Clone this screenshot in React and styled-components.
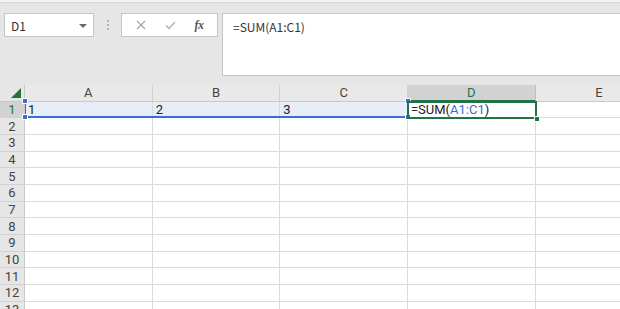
import React from "react";
import styled, { createGlobalStyle } from "styled-components";

const COL_W = 127.67;
const ROW_H = 16.67;
const HDR_W = 25;

const Global = createGlobalStyle`
  html, body { margin: 0; padding: 0; background: #fff; }
  body { font-family: "Noto Sans CJK SC", "Noto Sans", sans-serif; }
  #root { width: 620px; height: 309px; overflow: hidden; }
`;

const Page = styled.div`
  width: 620px;
  height: 309px;
  overflow: hidden;
  display: flex;
  flex-direction: column;
  background: #e6e6e6;
`;

const TopStrip = styled.div`
  height: 2px;
  background: #f4f4f4;
  border-bottom: 1px solid #d8d8d8;
`;

const FormulaBar = styled.div`
  height: 82px;
  display: flex;
  align-items: flex-start;
  padding: 10px 0 0 4px;
  box-sizing: border-box;
`;

const NameBox = styled.div`
  width: 90px;
  height: 24px;
  box-sizing: border-box;
  background: #fff;
  border: 1px solid #c6c6c6;
  display: flex;
  align-items: center;
  justify-content: space-between;
  padding: 0 6px 0 6px;
  font-size: 12px;
  color: #333;
`;

const Caret = styled.span`
  width: 0;
  height: 0;
  border-left: 4px solid transparent;
  border-right: 4px solid transparent;
  border-top: 4px solid #6a6a6a;
  margin-top: 1px;
`;

const Grip = styled.div`
  width: 27px;
  height: 24px;
  display: flex;
  flex-direction: column;
  align-items: center;
  justify-content: center;
  gap: 2px;
`;

const Dot = styled.span`
  width: 2px;
  height: 2px;
  background: #b4b4b4;
`;

const FnBox = styled.div`
  width: 97px;
  height: 24px;
  box-sizing: border-box;
  background: #fff;
  border: 1px solid #c6c6c6;
  display: flex;
  align-items: center;
  justify-content: space-around;
  padding: 0 4px;
`;

const FxLabel = styled.span`
  font-family: "Liberation Serif", serif;
  font-style: italic;
  font-weight: bold;
  font-size: 12px;
  color: #555;
  letter-spacing: -0.5px;
`;

const FormulaInput = styled.div`
  flex: 1;
  margin-left: 4px;
  height: 63px;
  box-sizing: border-box;
  background: #fff;
  border: 1px solid #c6c6c6;
  border-right: none;
  padding: 4px 0 0 10px;
  font-size: 12px;
  color: #333;
`;

const Sheet = styled.div`
  position: relative;
  flex: 1;
  background: #fff;
  display: grid;
  grid-template-columns: ${HDR_W}px repeat(5, ${COL_W}px);
  grid-auto-rows: ${ROW_H}px;
  overflow: hidden;
  font-family: Roboto, "Noto Sans", sans-serif;
`;

const Corner = styled.div`
  position: relative;
  background: #e6e6e6;
  border-right: 1px solid #c9c9c9;
  border-bottom: 1px solid #c9c9c9;
  box-sizing: border-box;
  &::after {
    content: "";
    position: absolute;
    right: 3px;
    bottom: 3px;
    width: 0;
    height: 0;
    border-left: 10px solid transparent;
    border-bottom: 10px solid #217346;
  }
`;

const ColHead = styled.div`
  box-sizing: border-box;
  background: ${(p) => (p.$active ? "#d2d2d2" : "#e9e9e9")};
  border-right: 1px solid ${(p) => (p.$active ? "#c0c0c0" : "#d0d0d0")};
  border-bottom: ${(p) => (p.$active ? "2px solid #217346" : "1px solid #c9c9c9")};
  color: ${(p) => (p.$active ? "#217346" : "#444")};
  font-size: 13px;
  display: flex;
  align-items: center;
  justify-content: center;
  line-height: 15px;
`;

const RowHead = styled.div`
  box-sizing: border-box;
  background: ${(p) => (p.$active ? "#d2d2d2" : "#e6e6e6")};
  border-right: 1px solid #c9c9c9;
  border-bottom: 1px solid #d2d2d2;
  color: ${(p) => (p.$active ? "#217346" : "#444")};
  font-size: 13px;
  display: flex;
  align-items: center;
  justify-content: center;
  line-height: 15px;
`;

const Cell = styled.div`
  box-sizing: border-box;
  background: ${(p) => (p.$ref ? "#e8eef8" : "#fff")};
  border-right: 1px solid #dadada;
  border-bottom: 1px solid #dadada;
  font-size: 13px;
  color: #222;
  padding-left: 3px;
  display: flex;
  align-items: center;
  white-space: nowrap;
  line-height: 15px;
`;

const RefText = styled.span`
  color: #3b6fcf;
`;

const RefRange = styled.div`
  position: absolute;
  left: ${HDR_W}px;
  top: ${ROW_H - 1}px;
  width: ${COL_W * 3}px;
  height: ${ROW_H + 1}px;
  box-sizing: border-box;
  border-left: 1px solid #3b6fcf;
  border-bottom: 2px solid #3b6fcf;
  pointer-events: none;
`;

const Handle = styled.span`
  position: absolute;
  width: 4px;
  height: 4px;
  background: ${(p) => p.$color};
  border: 1px solid #fff;
  ${(p) => p.$pos}
`;

const Active = styled.div`
  position: absolute;
  left: ${HDR_W + COL_W * 3 - 1}px;
  top: ${ROW_H - 1}px;
  width: ${COL_W + 2}px;
  height: ${ROW_H + 2}px;
  box-sizing: border-box;
  border: 2px solid #217346;
  pointer-events: none;
`;

const cols = ["A", "B", "C", "D", "E"];
const values = { A1: "1", B1: "2", C1: "3" };

function CrossIcon() {
  return (
    <svg width="10" height="10" viewBox="0 0 10 10">
      <path d="M1 1L9 9M9 1L1 9" stroke="#a8a8a8" strokeWidth="1.2" fill="none" />
    </svg>
  );
}

function CheckIcon() {
  return (
    <svg width="11" height="9" viewBox="0 0 11 9">
      <path d="M1 4.5L4 7.5L10 1" stroke="#b0b0b0" strokeWidth="1.3" fill="none" />
    </svg>
  );
}

export default function App() {
  const rows = Array.from({ length: 13 }, (_, i) => i + 1);
  return (
    <Page>
      <Global />
      <TopStrip />
      <FormulaBar>
        <NameBox>
          <span>D1</span>
          <Caret />
        </NameBox>
        <Grip>
          <Dot />
          <Dot />
          <Dot />
        </Grip>
        <FnBox>
          <CrossIcon />
          <CheckIcon />
          <FxLabel>fx</FxLabel>
        </FnBox>
        <FormulaInput>=SUM(A1:C1)</FormulaInput>
      </FormulaBar>
      <Sheet>
        <Corner />
        {cols.map((c) => (
          <ColHead key={c} $active={c === "D"}>
            {c}
          </ColHead>
        ))}
        {rows.map((r) => (
          <React.Fragment key={r}>
            <RowHead $active={r === 1}>{r}</RowHead>
            {cols.map((c) => {
              const id = c + r;
              const isRef = r === 1 && ["A", "B", "C"].includes(c);
              return (
                <Cell key={id} $ref={isRef}>
                  {id === "D1" ? (
                    <>
                      =SUM(<RefText>A1:C1</RefText>)
                    </>
                  ) : (
                    values[id]
                  )}
                </Cell>
              );
            })}
          </React.Fragment>
        ))}
        <RefRange>
          <Handle $color="#3b6fcf" $pos="left: -4px; top: -3px;" />
          <Handle $color="#3b6fcf" $pos="left: -4px; bottom: -4px;" />
          <Handle $color="#3b6fcf" $pos="right: -3px; top: -3px;" />
          <Handle $color="#3b6fcf" $pos="right: -3px; bottom: -4px;" />
        </RefRange>
        <Active>
          <Handle $color="#217346" $pos="right: -5px; bottom: -5px;" />
        </Active>
      </Sheet>
    </Page>
  );
}
